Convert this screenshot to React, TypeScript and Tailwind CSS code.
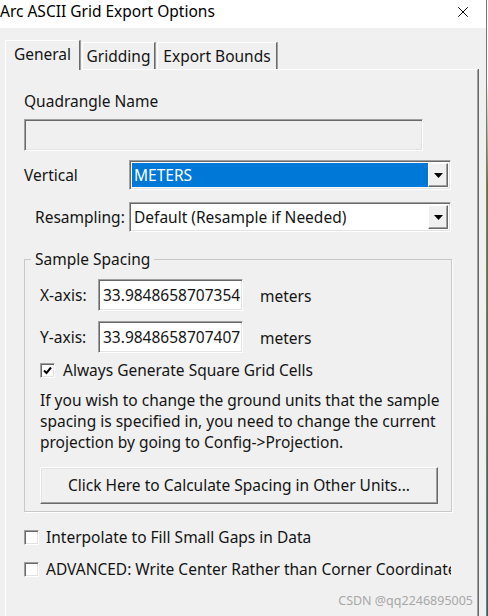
import { X } from "lucide-react";

const sunken =
  "border border-t-[#a0a0a0] border-l-[#a0a0a0] border-b-white border-r-white shadow-[inset_1px_1px_0_#696969,inset_-1px_-1px_0_#e3e3e3]";

function DropArrow() {
  return (
    <div className="flex w-[20px] items-center justify-center border border-t-white border-l-white border-b-[#696969] border-r-[#696969] bg-[#f0f0f0] shadow-[inset_-1px_-1px_0_#a0a0a0]">
      <svg width="9" height="5" viewBox="0 0 9 5">
        <path d="M0 0h9L4.5 5z" fill="#000" />
      </svg>
    </div>
  );
}

function Check({ checked }: { checked?: boolean }) {
  return (
    <div className={`flex h-[15px] w-[15px] shrink-0 items-center justify-center bg-white ${sunken}`}>
      {checked && (
        <svg width="9" height="9" viewBox="0 0 9 9">
          <path d="M1 4.5l2.5 2.5L8 1.5" stroke="#000" strokeWidth="2" fill="none" />
        </svg>
      )}
    </div>
  );
}

export default function App() {
  return (
    <div
      className="relative flex h-[616px] w-[488px] flex-col overflow-hidden bg-[#f0f0f0] text-[15.5px] leading-[21px] text-[#141414]"
      style={{ fontFamily: '"Noto Sans", "Liberation Sans", sans-serif' }}
    >
      {/* title bar */}
      <div className="flex h-[28px] items-center justify-between bg-white pb-[4px] pr-[16px]">
        <span className="text-[15.5px] leading-none text-black">Arc ASCII Grid Export Options</span>
        <X size={18} strokeWidth={1.3} className="text-black" />
      </div>

      <div className="flex flex-1 flex-col pl-[5px] pr-[10px] pt-[12px]">
        {/* tabs */}
        <div className="flex h-[29px] items-end">
          <div className="relative z-10 -mb-px flex h-[30px] w-[75px] items-center justify-center border border-b-0 border-t-white border-l-white border-r-[#696969] bg-[#f0f0f0] pb-[3px] shadow-[1px_0_0_#a0a0a0]">
            General
          </div>
          <div className="ml-[2px] flex h-[27px] w-[73px] items-center justify-center border border-b-0 border-t-white border-l-white border-r-[#696969] bg-[#f0f0f0] shadow-[1px_0_0_#a0a0a0]">
            Gridding
          </div>
          <div className="ml-[2px] flex h-[27px] w-[120px] items-center justify-center border border-b-0 border-t-white border-l-white border-r-[#696969] bg-[#f0f0f0] shadow-[1px_0_0_#a0a0a0]">
            Export Bounds
          </div>
        </div>

        {/* panel */}
        <div className="flex flex-1 flex-col border border-b-0 border-t-white border-l-white border-r-[#a0a0a0] pl-[18px] pr-[24px] pt-[21px] shadow-[1px_0_0_#696969]">
          <div>Quadrangle Name</div>
          <div className={`mt-[7px] h-[32px] w-[399px] bg-[#f0f0f0] ${sunken}`} />

          <div className="mt-[9px] flex items-center">
            <span className="w-[105px]">Vertical</span>
            <div className={`flex h-[30px] w-[322px] bg-white p-[2px] ${sunken}`}>
              <div className="flex flex-1 items-center bg-[#0078d7] pl-[2px] text-white">METERS</div>
              <DropArrow />
            </div>
          </div>

          <div className="mt-[12px] flex items-center">
            <span className="w-[105px] pl-[11px]">Resampling:</span>
            <div className={`flex h-[30px] w-[322px] bg-white p-[2px] ${sunken}`}>
              <div className="flex flex-1 items-center pl-[2px]">Default (Resample if Needed)</div>
              <DropArrow />
            </div>
          </div>

          {/* group box */}
          <div className="relative mt-[27px] w-[428px] border border-[#c8c8c8] pb-[7px] pl-[15px] pt-[19px] shadow-[1px_1px_0_white]">
            <span className="absolute left-[6px] top-[-11px] bg-[#f0f0f0] px-[4px]">Sample Spacing</span>

            <div className="flex items-center">
              <span className="w-[58px]">X-axis:</span>
              <div className={`flex h-[32px] w-[145px] items-center bg-white pl-[4px] ${sunken}`}>33.9848658707354</div>
              <span className="ml-[17px] mt-[2px]">meters</span>
            </div>
            <div className="mt-[10px] flex items-center">
              <span className="w-[58px]">Y-axis:</span>
              <div className={`flex h-[32px] w-[145px] items-center bg-white pl-[4px] ${sunken}`}>33.9848658707407</div>
              <span className="ml-[17px] mt-[2px]">meters</span>
            </div>

            <div className="mt-[7px] flex items-center gap-[8px]">
              <Check checked />
              <span>Always Generate Square Grid Cells</span>
            </div>

            <p className="mt-[9px] w-[400px]">
              If you wish to change the ground units that the sample spacing is specified in, you need to change the current
              projection by going to Config-&gt;Projection.
            </p>

            <button className="mt-[14px] flex h-[37px] w-[398px] items-center justify-center border border-t-white border-l-white border-b-[#696969] border-r-[#696969] bg-[#f0f0f0] shadow-[inset_-1px_-1px_0_#a0a0a0,inset_1px_1px_0_#e3e3e3]">
              Click Here to Calculate Spacing in Other Units...
            </button>
          </div>

          <div className="mt-[15px] flex items-center gap-[7px]">
            <Check />
            <span>Interpolate to Fill Small Gaps in Data</span>
          </div>
          <div className="mt-[11px] flex w-[427px] items-center gap-[7px] overflow-hidden whitespace-nowrap">
            <Check />
            <span>ADVANCED: Write Center Rather than Corner Coordinates</span>
          </div>
        </div>
      </div>

      {/* watermark */}
      <span className="absolute bottom-[9px] right-[15px] text-[12.5px] leading-none text-[#a8a8a8]">CSDN @qq2246895005</span>

      {/* neighbouring window edge */}
      <div className="absolute right-0 top-0 h-full w-[2px] border-l border-[#777] bg-gradient-to-b from-white from-[13%] via-[#6a7a20] via-[30%] to-[#1d6a6a]" />
    </div>
  );
}
